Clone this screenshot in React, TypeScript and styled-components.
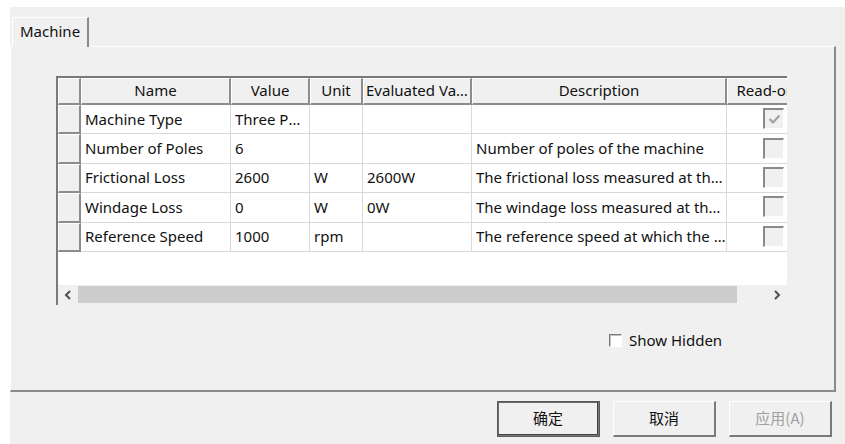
import React from "react"
import styled, { createGlobalStyle } from "styled-components"

const GlobalStyle = createGlobalStyle`
  html, body {
    margin: 0;
    padding: 0;
    background: #ffffff;
  }
  body {
    font-family: "Noto Sans", "Noto Sans CJK SC", sans-serif;
    font-size: 15px;
    color: #111;
  }
`

const Window = styled.div`
  margin: 7px 0 0 10px;
  height: 437px;
  background: #f0f0f0;
  display: flex;
  flex-direction: column;
  box-sizing: border-box;
`

const TabBar = styled.div`
  display: flex;
  padding: 10px 0 0 2px;
  height: 39px;
  box-sizing: border-box;
`

const Tab = styled.div`
  width: 77px;
  height: 30px;
  box-sizing: border-box;
  border-top: 1px solid #ffffff;
  border-left: 1px solid #ffffff;
  border-right: 2px solid #8a8a8a;
  padding: 3px 0 0 7px;
  background: #f0f0f0;
  position: relative;
  z-index: 1;
`

const Pane = styled.div`
  width: 826px;
  height: 346px;
  box-sizing: border-box;
  border-top: 1px solid #ffffff;
  border-left: 1px solid #ffffff;
  border-right: 2px solid #8a8a8a;
  border-bottom: 2px solid #8a8a8a;
  padding: 29px 0 0 45px;
  display: flex;
  flex-direction: column;
`

const Table = styled.div`
  width: 731px;
  height: 229px;
  box-sizing: border-box;
  border-top: 2px solid #7a7a7a;
  border-left: 2px solid #7a7a7a;
  background: #ffffff;
  overflow: hidden;
  display: flex;
  flex-direction: column;
`

const Grid = styled.div`
  display: grid;
  grid-template-columns: 23px 150px 79px 53px 109px 255px 90px;
  grid-auto-rows: 29.4px;
  grid-template-rows: 27px;
  width: 759px;
`

const HeadCell = styled.div`
  box-sizing: border-box;
  background: #f0f0f0;
  border-top: 1px solid #ffffff;
  border-left: 1px solid #ffffff;
  border-right: 2px solid #8c8c8c;
  border-bottom: 2px solid #8c8c8c;
  display: flex;
  align-items: center;
  justify-content: center;
  white-space: nowrap;
  overflow: hidden;
  padding: 0 2px 2px;
`

const HeadText = styled.span`
  overflow: hidden;
  text-overflow: ellipsis;
`

const RowHead = styled.div`
  box-sizing: border-box;
  background: #f0f0f0;
  border-top: 1px solid #ffffff;
  border-left: 1px solid #ffffff;
  border-right: 2px solid #8c8c8c;
  border-bottom: 2px solid #8c8c8c;
`

const Cell = styled.div<{ $center?: boolean }>`
  box-sizing: border-box;
  border-right: 1px solid #d9d9d9;
  border-bottom: 1px solid #d9d9d9;
  padding: 0 0 1px 4px;
  display: flex;
  align-items: center;
  justify-content: ${(p) => (p.$center ? "center" : "flex-start")};
  white-space: nowrap;
  overflow: hidden;
`

const CellText = styled.span`
  overflow: hidden;
  text-overflow: ellipsis;
`

const Box = styled.div`
  width: 21px;
  height: 21px;
  box-sizing: border-box;
  border-top: 2px solid #8a8a8a;
  border-left: 2px solid #8a8a8a;
  border-right: 1px solid #ffffff;
  border-bottom: 1px solid #ffffff;
  background: #f0f0f0;
  display: flex;
  align-items: center;
  justify-content: center;
`

const Filler = styled.div`
  flex: 1;
`

const ScrollBar = styled.div`
  height: 20px;
  display: flex;
  background: #f0f0f0;
  flex-shrink: 0;
`

const Arrow = styled.div`
  width: 20px;
  display: flex;
  align-items: center;
  justify-content: center;
`

const Thumb = styled.div`
  width: 659px;
  margin: 1px 0 2px;
  background: #cdcdcd;
`

const Track = styled.div`
  flex: 1;
`

const Options = styled.div`
  display: flex;
  align-items: center;
  gap: 7px;
  padding: 25px 0 0 553px;
`

const SmallBox = styled.div`
  width: 13px;
  height: 13px;
  box-sizing: border-box;
  border-top: 1px solid #7a7a7a;
  border-left: 1px solid #7a7a7a;
  border-right: 1px solid #ffffff;
  border-bottom: 1px solid #ffffff;
  background: #ffffff;
  box-shadow: inset 1px 1px 0 #c0c0c0;
`

const Buttons = styled.div`
  display: flex;
  gap: 13px;
  padding: 9px 0 0 487px;
`

const Button = styled.button<{ $default?: boolean; $disabled?: boolean }>`
  width: 103px;
  height: 36px;
  box-sizing: border-box;
  background: #f0f0f0;
  font-family: "Noto Sans CJK SC", sans-serif;
  font-size: 15px;
  color: ${(p) => (p.$disabled ? "#a0a0a0" : "#111")};
  border-top: 1px solid #ffffff;
  border-left: 1px solid #ffffff;
  border-right: 2px solid #7a7a7a;
  border-bottom: 2px solid #7a7a7a;
  outline: ${(p) => (p.$default ? "1px solid #5a5a5a" : "none")};
  outline-offset: -1px;
  box-shadow: ${(p) =>
    p.$default ? "inset -1px -1px 0 #404040, inset 1px 1px 0 #6a6a6a" : "none"};
  padding: 0 0 2px;
`

type Row = { name: string; value: string; unit: string; evaluated: string; desc: string; checked?: boolean }

const rows: Row[] = [
  { name: "Machine Type", value: "Three Phase", unit: "", evaluated: "", desc: "", checked: true },
  { name: "Number of Poles", value: "6", unit: "", evaluated: "", desc: "Number of poles of the machine" },
  { name: "Frictional Loss", value: "2600", unit: "W", evaluated: "2600W", desc: "The frictional loss measured at the reference speed" },
  { name: "Windage Loss", value: "0", unit: "W", evaluated: "0W", desc: "The windage loss measured at the reference speed" },
  { name: "Reference Speed", value: "1000", unit: "rpm", evaluated: "", desc: "The reference speed at which the losses are measured" },
]

const headers = ["Name", "Value", "Unit", "Evaluated Value", "Description", "Read-only"]

const Chevron = ({ dir }: { dir: "left" | "right" }) => (
  <svg width="8" height="10" viewBox="0 0 8 10">
    <path
      d={dir === "left" ? "M6 1 L2 5 L6 9" : "M2 1 L6 5 L2 9"}
      fill="none"
      stroke="#505050"
      strokeWidth="2"
    />
  </svg>
)

export default function App() {
  return (
    <>
      <GlobalStyle />
      <Window>
        <TabBar>
          <Tab>Machine</Tab>
        </TabBar>
        <Pane>
          <Table>
            <Grid>
              <HeadCell />
              {headers.map((h) => (
                <HeadCell key={h}>
                  <HeadText>{h}</HeadText>
                </HeadCell>
              ))}
              {rows.map((r) => (
                <React.Fragment key={r.name}>
                  <RowHead />
                  <Cell><CellText>{r.name}</CellText></Cell>
                  <Cell><CellText>{r.value}</CellText></Cell>
                  <Cell><CellText>{r.unit}</CellText></Cell>
                  <Cell><CellText>{r.evaluated}</CellText></Cell>
                  <Cell><CellText>{r.desc}</CellText></Cell>
                  <Cell $center>
                    <Box>
                      {r.checked && (
                        <svg width="13" height="11" viewBox="0 0 13 11">
                          <path d="M1.5 5 L5 8.5 L11.5 1.5" fill="none" stroke="#a0a0a0" strokeWidth="2.2" />
                        </svg>
                      )}
                    </Box>
                  </Cell>
                </React.Fragment>
              ))}
            </Grid>
            <Filler />
            <ScrollBar>
              <Arrow><Chevron dir="left" /></Arrow>
              <Thumb />
              <Track />
              <Arrow><Chevron dir="right" /></Arrow>
            </ScrollBar>
          </Table>
          <Options>
            <SmallBox />
            <span>Show Hidden</span>
          </Options>
        </Pane>
        <Buttons>
          <Button $default>确定</Button>
          <Button>取消</Button>
          <Button $disabled>应用(A)</Button>
        </Buttons>
      </Window>
    </>
  )
}
